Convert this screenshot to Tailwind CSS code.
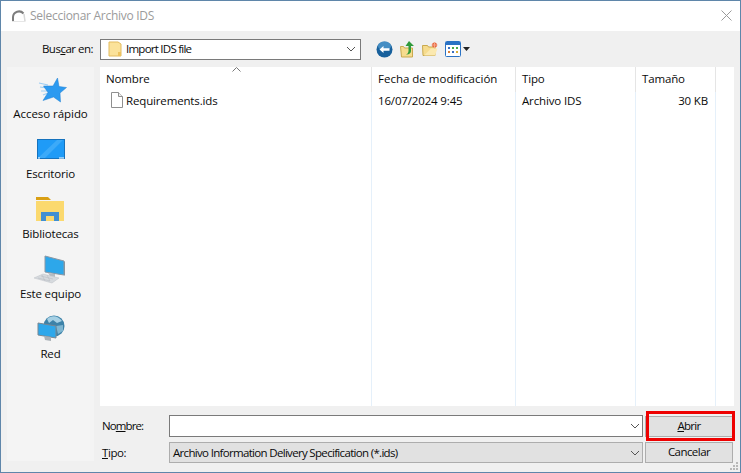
<!DOCTYPE html>
<html lang="es">
<head>
    <meta charset="UTF-8">
    <meta name="viewport" content="width=device-width, initial-scale=1.0">
    <title>Seleccionar Archivo IDS</title>
    <script src="https://cdn.jsdelivr.net/npm/@tailwindcss/browser@4"></script>
</head>
<body class="bg-[#f0f0f0] overflow-hidden">

<div class="relative w-[741px] h-[473px] flex flex-col border border-[#5f86aa] bg-[#f0f0f0] font-['Open_Sans',sans-serif] text-[11.5px] text-[#0a0a0a] tracking-[-0.15px]">

    <!-- Barra de titulo -->
    <div class="h-[30px] shrink-0 bg-white flex items-center pl-[10px] pr-[8px]">
        <svg width="16" height="16" viewBox="0 0 16 16" class="mr-[3px]">
            <path d="M2 13V9a6 6 0 0 1 10.500-3.500" fill="none" stroke="#7d7d7d" stroke-width="2"/>
            <path d="M13 6l1 7.500" fill="none" stroke="#d8d8d8" stroke-width="1.500"/>
            <path d="M1 13.500h13" stroke="#e6e6e6"/>
        </svg>
        <span class="text-[#9b9b9b] text-[12px] tracking-[-0.28px]">Seleccionar Archivo IDS</span>
        <svg width="11" height="11" viewBox="0 0 11 11" class="ml-auto mb-[2px]">
            <path d="M0.500 0.500l10 10M10.500 0.500l-10 10" stroke="#9a9a9a" stroke-width="1"/>
        </svg>
    </div>

    <!-- Barra Buscar en -->
    <div class="h-[36px] shrink-0 flex items-center">
        <span class="w-[99px] text-right pr-[7px] tracking-[-0.5px]">Bus<u>c</u>ar en:</span>
        <div class="w-[261px] h-[21px] bg-white border border-[#7a7a7a] flex items-center pl-[7px] pr-[4px]">
            <svg width="14" height="16" viewBox="0 0 14 16" class="mr-[4px]">
                <path d="M1 1h9l3 2v12H1z" fill="#fbe29a" stroke="#e3bb5e"/>
                <path d="M10 11h3v4h-3z" fill="#eec35f"/>
            </svg>
            <span class="tracking-[-0.75px]">Import IDS file</span>
            <svg width="10" height="6" viewBox="0 0 10 6" class="ml-auto">
                <path d="M1 1l4 4 4-4" fill="none" stroke="#555"/>
            </svg>
        </div>
        <div class="flex items-center ml-[15px]">
            <svg width="17" height="17" viewBox="0 0 17 17">
                <circle cx="8.500" cy="8.500" r="8" fill="#17609c"/>
                <ellipse cx="8.500" cy="5" rx="6.500" ry="4.500" fill="#5aa2d6" opacity="0.7"/>
                <path d="M3.500 8.500l4-3.500v2.200h6v2.600h-6V12z" fill="#fff"/>
            </svg>
            <svg width="16" height="17" viewBox="0 0 16 17" class="ml-[6px]">
                <path d="M1.500 5.500h3l1 1.500h8v9h-11z" fill="#f6dc8e" stroke="#c9a94e"/>
                <path d="M10 0l5 5h-3v5c0 2.500-2.500 4-5 3.500 1.500-.5 2.500-2 2.500-3.500V5H6.500z" fill="#2f9a3a"/>
            </svg>
            <svg width="16" height="14" viewBox="0 0 16 14" class="ml-[7px]">
                <path d="M0.500 3.500h5l1 1.500h6.500v8.500h-12z" fill="#f6dc8e" stroke="#c9a94e"/>
                <path d="M9 6.500h6.500l-2.500 7h-11z" fill="#fbe9b0"/>
                <circle cx="12.500" cy="3" r="2.500" fill="#e8663c"/>
                <path d="M12.500 0v6M9.500 3h6" stroke="#f4a58a"/>
            </svg>
            <svg width="16" height="16" viewBox="0 0 16 16" class="ml-[7px]">
                <rect x="0.500" y="0.500" width="15" height="15" rx="1" fill="#fff" stroke="#2a72c4"/>
                <rect x="1" y="1" width="14" height="3" fill="#2a72c4"/>
                <rect x="3" y="6" width="2" height="2" fill="#3b6fc0"/>
                <rect x="7" y="6" width="2" height="2" fill="#4aa84a"/>
                <rect x="11" y="6" width="2" height="2" fill="#4aa84a"/>
                <rect x="3" y="10" width="2" height="2" fill="#d9803a"/>
                <rect x="7" y="10" width="2" height="2" fill="#3b6fc0"/>
                <rect x="11" y="10" width="2" height="2" fill="#d9b13a"/>
            </svg>
            <svg width="7" height="4" viewBox="0 0 7 4" class="ml-[2px]">
                <path d="M0 0h7L3.500 4z" fill="#222"/>
            </svg>
        </div>
    </div>

    <!-- Zona principal -->
    <div class="flex-1 flex min-h-0 pl-[6px] pb-[11px] pr-[6px]">

        <!-- Barra lateral -->
        <div class="w-[87px] shrink-0 bg-[#f4f4f4] flex flex-col items-center gap-[12px] pt-[7px]">
            <div class="h-[48px] flex flex-col items-center">
                <svg width="32" height="32" viewBox="0 0 32 32">
                    <path d="M4 9l9 2M5 13l7 1M6 17l6 0M8 21l5-2" stroke="#9ccdf3" stroke-width="1.200"/>
                    <path d="M22.500 4L24 12.500l7.500 1-6.500 5.500.5 9-7-5-10.500 3.500 5-8-4.500-6.500L18 12z" fill="#2c9af0" stroke="#1c7fd2" stroke-width="0.500"/>
                </svg>
                <span class="h-[16px] leading-[16px] whitespace-nowrap tracking-[-0.05px]">Acceso rápido</span>
            </div>
            <div class="h-[48px] flex flex-col items-center">
                <svg width="32" height="32" viewBox="0 0 32 32">
                    <rect x="2.500" y="5.500" width="27" height="19" fill="#1f9bf7" stroke="#1572bd"/>
                    <path d="M3 24L22 6h6L10 24z" fill="#49b1fa" opacity="0.700"/>
                    <path d="M3 24h2M24 24h5" stroke="#fff"/>
                </svg>
                <span class="h-[16px] leading-[16px]">Escritorio</span>
            </div>
            <div class="h-[48px] flex flex-col items-center">
                <svg width="32" height="32" viewBox="0 0 32 32">
                    <path d="M2 3h12l3 3H2z" fill="#d99f14"/>
                    <rect x="2" y="7" width="28" height="20" fill="#fbd96e"/>
                    <path d="M7 27v-9h18v9h-5v-5h-8v5z" fill="#3f8fd2"/>
                </svg>
                <span class="h-[16px] leading-[16px]">Bibliotecas</span>
            </div>
            <div class="h-[48px] flex flex-col items-center">
                <svg width="32" height="32" viewBox="0 0 32 32">
                    <path d="M11 2l19 5v14l-19-3z" fill="#2da7ea" stroke="#8a98a5"/>
                    <path d="M30 7v14l1 1V8z" fill="#88959f"/>
                    <path d="M14 19l7 1v3l-5-1z" fill="#b5bcc2"/>
                    <path d="M0 24l9-4 16 4-7 5z" fill="#d6dade" stroke="#bcc1c6" stroke-width="0.500"/>
                    <path d="M4 24l12 3M7 22l12 3M8 21l3 6M13 21l3 6" stroke="#b4b9be" stroke-width="0.500"/>
                </svg>
                <span class="h-[16px] leading-[16px] whitespace-nowrap">Este equipo</span>
            </div>
            <div class="h-[48px] flex flex-col items-center">
                <svg width="32" height="32" viewBox="0 0 32 32">
                    <circle cx="19" cy="12" r="10.500" fill="#3d82a8"/>
                    <path d="M12 5c4-4 11-4 15 2l-5 2-4-3-4 3z" fill="#a6d0e4"/>
                    <path d="M21 12l7-1 0 6-5 3z" fill="#7fb6d1"/>
                    <path d="M3 9l18 3v12l-18-3z" fill="#2da7ea" stroke="#7a8791"/>
                    <path d="M9 22l7 1v4l-6-1z" fill="#a9b1b7"/>
                </svg>
                <span class="h-[16px] leading-[16px]">Red</span>
            </div>
        </div>

        <!-- Lista y formulario -->
        <div class="flex-1 min-w-0 flex flex-col ml-[6px]">
            <div class="relative h-[339px] shrink-0 bg-white grid grid-cols-[272px_144px_120px_80px_18px] grid-rows-[25px_1fr]">
                <svg width="9" height="5" viewBox="0 0 9 5" class="absolute left-[132px] top-[0px]">
                    <path d="M0.500 4.500l4-4 4 4" fill="none" stroke="#777"/>
                </svg>
                <div class="border-r border-[#e5e5e5] pl-[6px] pt-[3px]">Nombre</div>
                <div class="border-r border-[#e5e5e5] pl-[6px] pt-[3px] tracking-[0px]">Fecha de modificación</div>
                <div class="border-r border-[#e5e5e5] pl-[6px] pt-[3px]">Tipo</div>
                <div class="border-r border-[#e5e5e5] pl-[6px] pt-[3px]">Tamaño</div>
                <div></div>
                <div class="border-r border-[#e5f0fa] pl-[10px] flex items-start">
                    <svg width="14" height="16" viewBox="0 0 14 16" class="mr-[2px]">
                        <path d="M1.500 0.500h7l4 4v11h-11z" fill="#fff" stroke="#8f8f8f"/>
                        <path d="M8.500 0.500v4h4" fill="#eee" stroke="#8f8f8f"/>
                    </svg>
                    <span>Requirements.ids</span>
                </div>
                <div class="border-r border-[#e5f0fa] pl-[6px]">16/07/2024 9:45</div>
                <div class="border-r border-[#e5f0fa] pl-[6px]">Archivo IDS</div>
                <div class="border-r border-[#e5f0fa] pr-[7px] text-right">30 KB</div>
                <div></div>
            </div>

            <div class="flex mt-[9px]">
                <div class="w-[69px] shrink-0 pl-[2px] flex flex-col">
                    <span class="h-[22px] leading-[22px] tracking-[-0.9px]">No<u>m</u>bre:</span>
                    <span class="h-[21px] mt-[5px] leading-[21px] tracking-[-0.4px]"><u>T</u>ipo:</span>
                </div>
                <div class="w-[474px] shrink-0 flex flex-col">
                    <div class="h-[22px] bg-white border border-[#7a7a7a] flex items-center justify-end pr-[2px]">
                        <svg width="10" height="6" viewBox="0 0 10 6"><path d="M1 1l4 4 4-4" fill="none" stroke="#555"/></svg>
                    </div>
                    <div class="h-[21px] mt-[5px] bg-[#e1e1e1] border border-[#adadad] flex items-center pl-[3px] pr-[2px]">
                        <span class="tracking-[-0.68px]">Archivo Information Delivery Specification (*.ids)</span>
                        <svg width="10" height="6" viewBox="0 0 10 6" class="ml-auto"><path d="M1 1l4 4 4-4" fill="none" stroke="#555"/></svg>
                    </div>
                </div>
                <div class="w-[88px] shrink-0 ml-[2px] flex flex-col">
                    <div class="relative h-[21px] mt-[1px] bg-[#e1e1e1] border border-[#adadad] flex items-center justify-center tracking-[-0.7px]">
                        <span class="mb-[2px]"><u>A</u>brir</span>
                        <div class="absolute left-[0px] -right-[3px] -top-[6px] -bottom-[5px] border-[3px] border-[#ee0000]"></div>
                    </div>
                    <div class="h-[21px] mt-[5px] bg-[#e1e1e1] border border-[#adadad] flex items-center justify-center tracking-[-0.55px]"><span class="mb-[2px]">Cancelar</span></div>
                </div>
            </div>
        </div>
    </div>

    <!-- Tirador de tamano -->
    <svg width="10" height="10" viewBox="0 0 10 10" class="absolute right-[1px] bottom-[1px]">
        <path d="M7 1h2v2H7zM4 4h2v2H4zM7 4h2v2H7zM1 7h2v2H1zM4 7h2v2H4zM7 7h2v2H7z" fill="#b8b8b8"/>
    </svg>
</div>

</body>
</html>
